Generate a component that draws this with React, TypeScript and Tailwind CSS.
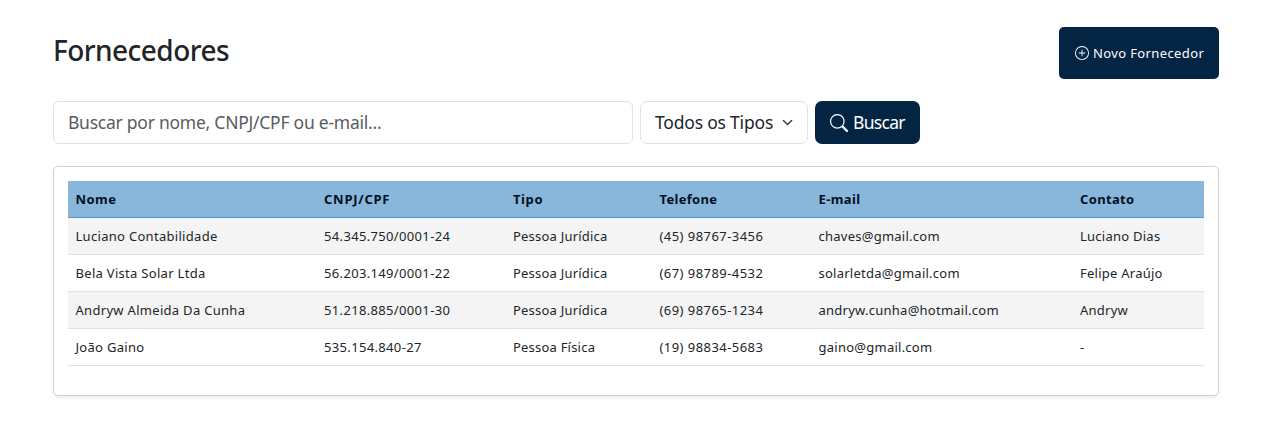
import { BsPlusCircle, BsSearch } from "react-icons/bs";

type Supplier = {
  name: string;
  document: string;
  kind: string;
  phone: string;
  email: string;
  contact: string;
};

const suppliers: Supplier[] = [
  { name: "Luciano Contabilidade", document: "54.345.750/0001-24", kind: "Pessoa Jurídica", phone: "(45) 98767-3456", email: "chaves@gmail.com", contact: "Luciano Dias" },
  { name: "Bela Vista Solar Ltda", document: "56.203.149/0001-22", kind: "Pessoa Jurídica", phone: "(67) 98789-4532", email: "solarletda@gmail.com", contact: "Felipe Araújo" },
  { name: "Andryw Almeida Da Cunha", document: "51.218.885/0001-30", kind: "Pessoa Jurídica", phone: "(69) 98765-1234", email: "andryw.cunha@hotmail.com", contact: "Andryw" },
  { name: "João Gaino", document: "535.154.840-27", kind: "Pessoa Física", phone: "(19) 98834-5683", email: "gaino@gmail.com", contact: "-" },
];

const columns: { key: keyof Supplier; label: string; head: string; cell: string }[] = [
  { key: "name", label: "Nome", head: "pl-[7.5px] tracking-[0.45px]", cell: "pl-[7.5px] tracking-[0.3px]" },
  { key: "document", label: "CNPJ/CPF", head: "pl-2 tracking-[0.75px]", cell: "pl-2 tracking-[0.34px]" },
  { key: "kind", label: "Tipo", head: "pl-2 tracking-[0.6px]", cell: "pl-2 tracking-[0.21px]" },
  { key: "phone", label: "Telefone", head: "pl-[7.5px] tracking-[0.3px]", cell: "pl-[7.5px] tracking-[0.44px]" },
  { key: "email", label: "E-mail", head: "pl-[7.5px] tracking-[0.4px]", cell: "pl-[7.5px] tracking-[0.25px]" },
  { key: "contact", label: "Contato", head: "pl-2 tracking-[0.35px]", cell: "pl-2 tracking-[0.25px]" },
];

export default function App() {
  return (
    <div className="h-[440px] bg-white pt-[27px] pr-[60px] pl-[53px] font-['Noto_Sans',sans-serif] text-[#212529]">
      <header className="flex h-[52px] items-start justify-between">
        <h1 className="mt-[6px] text-[28px] leading-[34px] font-medium tracking-[-0.55px]">Fornecedores</h1>
        <button className="flex h-[52px] w-[160px] items-center rounded-[5px] bg-[#042444] pl-4 text-[13px] tracking-[0.38px] text-white">
          <BsPlusCircle className="mr-1 size-[14px] shrink-0" />
          <span className="mt-px">Novo Fornecedor</span>
        </button>
      </header>

      <form className="mt-[22px] flex h-[43px] gap-[7px]">
        <input
          className="w-[580px] rounded-[6px] border border-[#dee2e6] px-[14px] text-[17.5px] tracking-[-0.25px] outline-none placeholder:text-[#595c5f]"
          placeholder="Buscar por nome, CNPJ/CPF ou e-mail..."
        />
        <button type="button" className="flex w-[168px] items-center justify-between rounded-[7px] border border-[#dee2e6] pr-[14px] pl-[14px] text-[17.5px] tracking-[-0.2px]">
          Todos os Tipos
          <svg className="size-[11px]" viewBox="0 0 16 16" fill="none" stroke="#343a40" strokeWidth="2" strokeLinecap="round" strokeLinejoin="round">
            <path d="m2 5 6 6 6-6" />
          </svg>
        </button>
        <button type="button" className="flex w-[105px] items-center rounded-[7px] bg-[#042444] pl-[15px] text-[17.5px] tracking-[-0.7px] text-white">
          <BsSearch className="mr-[5px] size-[18px] shrink-0" />
          Buscar
        </button>
      </form>

      <section className="mt-[22px] h-[230px] rounded-[5px] border border-[#d0d1d2] p-[14px] shadow-[0_2px_4px_rgba(0,0,0,0.075)]">
        <table className="w-full table-fixed border-separate border-spacing-0 text-left text-[13px]">
          <colgroup>
            <col className="w-[248px]" />
            <col className="w-[189px]" />
            <col className="w-[147px]" />
            <col className="w-[159px]" />
            <col className="w-[261px]" />
            <col />
          </colgroup>
          <thead>
            <tr className="h-[37px] bg-[#89b7dc] text-[#03101f]">
              {columns.map((column) => (
                <th key={column.key} className={`border-b border-[#4f94d0] pt-[2px] pr-2 pb-0 font-bold ${column.head}`}>
                  {column.label}
                </th>
              ))}
            </tr>
          </thead>
          <tbody>
            {suppliers.map((supplier) => (
              <tr key={supplier.name} className="h-[37px] odd:bg-[#f4f4f4]">
                {columns.map((column) => (
                  <td key={column.key} className={`border-b border-[#dee2e6] pt-[2px] pr-2 pb-0 ${column.cell}`}>
                    {supplier[column.key]}
                  </td>
                ))}
              </tr>
            ))}
          </tbody>
        </table>
      </section>
    </div>
  );
}
